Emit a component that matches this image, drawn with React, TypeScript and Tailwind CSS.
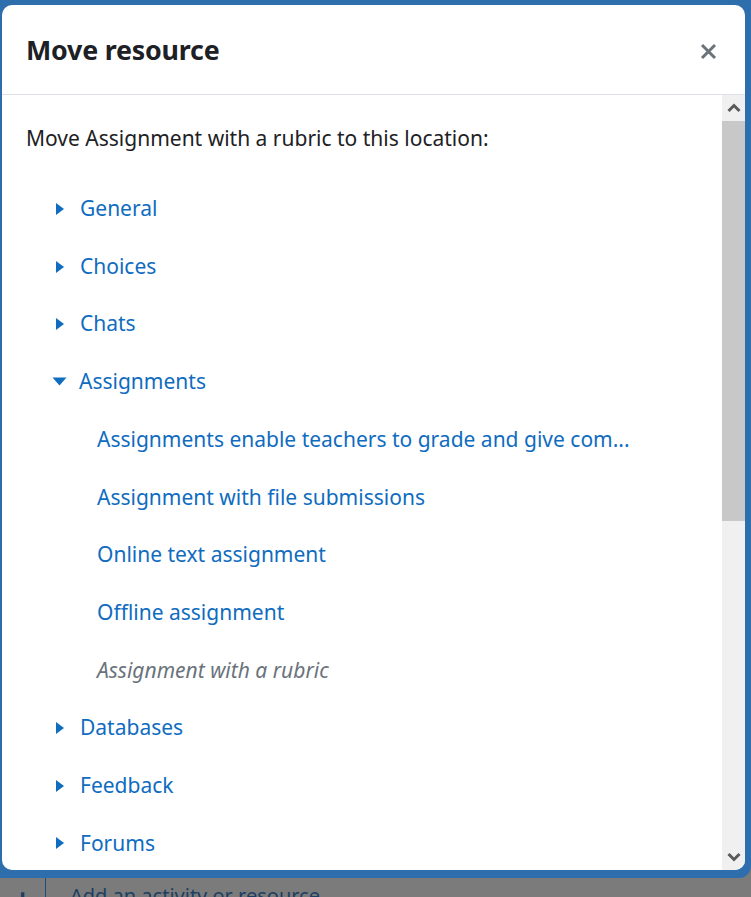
const sections = ['General', 'Choices', 'Chats'];
const assignments = [
    'Assignments enable teachers to grade and give com...',
    'Assignment with file submissions',
    'Online text assignment',
    'Offline assignment',
];
const after = ['Databases', 'Feedback', 'Forums'];

const CaretRight = () => (
    <svg width="10" height="14" viewBox="0 0 10 14" className="shrink-0">
        <path d="M1 1 L9 7 L1 13 Z" fill="#0f6cbf" />
    </svg>
);

const CaretDown = () => (
    <svg width="15" height="9" viewBox="0 0 15 9" className="shrink-0">
        <path d="M0.5 0.5 L14.5 0.5 L7.5 8.5 Z" fill="#0f6cbf" />
    </svg>
);

const Chevron = ({ up }: { up?: boolean }) => (
    <svg width="14" height="10" viewBox="0 0 14 10">
        <path d={up ? 'M1.5 8 L7 2.5 L12.5 8' : 'M1.5 2 L7 7.5 L12.5 2'} stroke="#5a5a5a" strokeWidth="3" fill="none" />
    </svg>
);

const Row = ({ children }: { children: React.ReactNode }) => (
    <li className="h-[57.7px] flex items-center">{children}</li>
);

export default function App() {
    return (
        <div
            className="relative w-[751px] h-[897px] overflow-hidden bg-[#7b7b7b]"
            style={{ fontFamily: '"Noto Sans", "Open Sans", sans-serif' }}
        >
            {/* page behind the dialog */}
            <div className="h-[20px] bg-[#2f6ead] flex items-end gap-16 px-6 text-[#1c3a5a] text-[18px] leading-none -mt-[12px]">
                <span>My courses</span>
                <span>THEME</span>
            </div>
            <div className="absolute left-0 right-0 top-[878px] flex items-start">
                <div className="w-[46px] h-[30px] border-r border-[#1d4d7d] flex justify-center pt-[6px]">
                    <span className="text-[#1d3f62] text-[30px] font-bold leading-none">+</span>
                </div>
                <span className="ml-6 mt-[8px] text-[#1d3f62] text-[20px] leading-none">Add an activity or resource</span>
            </div>

            {/* blue backing */}
            <div className="absolute left-0 top-0 w-[751px] h-[878px] bg-[#2f6ead] rounded-br-[12px]" />

            {/* dialog */}
            <div className="absolute left-[2px] top-[5px] w-[743px] h-[865px] bg-white rounded-[10px] flex flex-col overflow-hidden">
                <div className="h-[90px] shrink-0 border-b border-[#dee2e6] flex items-center justify-between pl-[24px] pr-[28px]">
                    <h2 className="text-[26.8px] font-bold text-[#1d2125] tracking-[-0.2px] mt-[2px]">Move resource</h2>
                    <svg width="17" height="17" viewBox="0 0 17 17" className="mt-[4px]">
                        <path d="M2 2 L15 15 M15 2 L2 15" stroke="#6a737b" strokeWidth="3" />
                    </svg>
                </div>
                <div className="flex-1 flex min-h-0">
                    <div className="flex-1 pl-[24px] pt-[28px] text-[21px]">
                        <p className="text-[#1d2125] leading-[30px]">Move Assignment with a rubric to this location:</p>
                        <ul className="mt-[27px] pl-[29px]">
                            {sections.map((s) => (
                                <Row key={s}>
                                    <CaretRight />
                                    <a className="ml-[15px] text-[#0f6cbf]">{s}</a>
                                </Row>
                            ))}
                            <Row>
                                <span className="-ml-[3px]"><CaretDown /></span>
                                <a className="ml-[12px] text-[#0f6cbf]">Assignments</a>
                            </Row>
                            {assignments.map((a) => (
                                <Row key={a}>
                                    <a className="ml-[42px] text-[#0f6cbf] whitespace-nowrap">{a}</a>
                                </Row>
                            ))}
                            <Row>
                                <span className="ml-[42px] italic text-[#6a737b]">Assignment with a rubric</span>
                            </Row>
                            {after.map((s) => (
                                <Row key={s}>
                                    <CaretRight />
                                    <a className="ml-[15px] text-[#0f6cbf]">{s}</a>
                                </Row>
                            ))}
                        </ul>
                    </div>
                    {/* scrollbar */}
                    <div className="w-[23px] shrink-0 bg-[#f0f0f0] flex flex-col">
                        <div className="h-[26px] flex items-center justify-center">
                            <Chevron up />
                        </div>
                        <div className="h-[400px] bg-[#c8c8c8]" />
                        <div className="flex-1" />
                        <div className="h-[26px] flex items-center justify-center">
                            <Chevron />
                        </div>
                    </div>
                </div>
            </div>
        </div>
    );
}
